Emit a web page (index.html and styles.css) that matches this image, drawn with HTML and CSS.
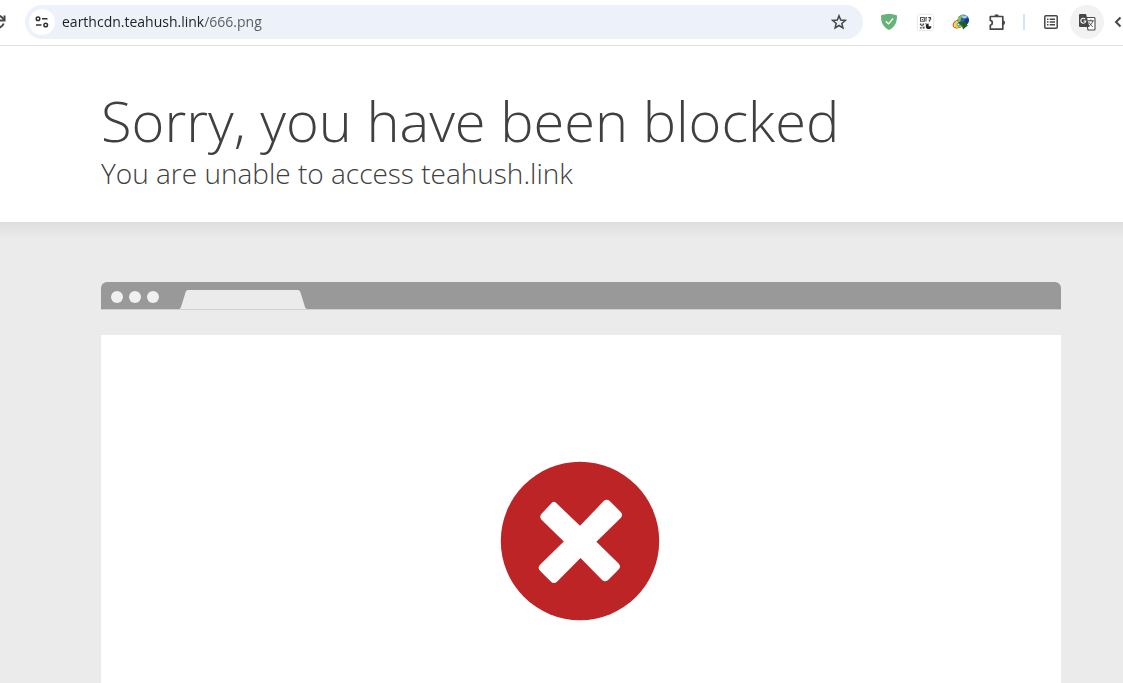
FILE: index.html
```html
<!DOCTYPE html>
<html lang="en">
<head>
  <meta charset="UTF-8">
  <meta name="viewport" content="width=device-width, initial-scale=1">
  <title>Sorry, you have been blocked</title>
  <link rel="stylesheet" href="styles.css">
</head>
<body>
  <!-- Browser toolbar -->
  <div class="toolbar">
    <button class="reload" aria-label="Reload">
      <svg width="16" height="16" viewBox="0 0 16 16" fill="none" stroke="#474747" stroke-width="2">
        <path d="M13.6 9.5A6 6 0 1 1 12.4 3.9L14 5.6"/>
        <path d="M14.5 1.500v5h-5"/>
      </svg>
    </button>

    <form class="omnibox">
      <button type="button" class="site-info" aria-label="View site information">
        <svg width="14" height="12" viewBox="0 0 14 12" fill="none" stroke="#303134" stroke-width="1.5">
          <circle cx="3" cy="2.8" r="1.8"/>
          <path d="M7 2.8h5.5M1 9h5.5"/>
          <circle cx="10.7" cy="9" r="1.8"/>
        </svg>
      </button>
      <input type="text" class="url" aria-label="Address" value="earthcdn.teahush.link/666.png" spellcheck="false">
      <button type="button" class="star" aria-label="Bookmark this page">
        <svg width="16" height="16" viewBox="0 0 16 16" fill="none" stroke="#474747" stroke-width="1.5">
          <path d="M8 1.8l1.7 4.3 4.6.3-3.5 3 1.1 4.5L8 11.5l-3.9 2.4 1.1-4.5-3.5-3 4.6-.3z"/>
        </svg>
      </button>
    </form>

    <div class="extensions">
      <button class="tool" aria-label="Ad blocker">
        <svg width="16" height="16" viewBox="0 0 16 16">
          <path d="M8 0c2.8 0 5.7.6 8 1.4C16 8 14.6 12.2 8 16 1.4 12.2 0 8 0 1.4 2.3.6 5.2 0 8 0z" fill="#67b279"/>
          <path d="M4.8 7.2l2.7 2.7 4.6-5.4" fill="none" stroke="#fff" stroke-width="1.3"/>
        </svg>
      </button>
      <button class="tool" aria-label="QR code">
        <svg class="qr" width="15" height="15" viewBox="0 0 16 16">
          <rect width="16" height="16" rx="1" fill="#fff"/>
          <path d="M2.7 2.7h4v4h-4z" fill="none" stroke="#555" stroke-width="1.2"/>
          <path d="M4.2 4.2h1v1h-1zM8 2h1.500v1.500H9V7H8zM11 2h3v3h-1v2h-1.500V5h1V3.500H11zM2 9h1.500v1.500H5V9h1.500v2H5v1H3.500v-1H2zM2 13h2v1.500H2zM5 12.500h2v2H5zM8 8.500h1V10H8z" fill="#444"/>
          <path d="M11.300 9v3h3A3 3 0 1 1 11.300 9z" fill="#222"/>
        </svg>
      </button>
      <button class="tool" aria-label="Download manager">
        <svg width="18" height="16" viewBox="0 0 18 16">
          <ellipse cx="6.500" cy="9.800" rx="5.600" ry="3.700" transform="rotate(-25 6.500 9.800)" fill="#fff" stroke="#d9532b" stroke-width="1.200"/>
          <ellipse cx="7" cy="9.800" rx="4.300" ry="2.600" transform="rotate(-25 7 9.800)" fill="#fff" stroke="#f2d32e" stroke-width="1.500"/>
          <ellipse cx="7.500" cy="10" rx="2.800" ry="1.500" transform="rotate(-25 7.500 10)" fill="#fff" stroke="#55b94b" stroke-width="1.200"/>
          <circle cx="11.300" cy="6.300" r="5.700" fill="#2b62b8"/>
          <path d="M5.800 4.800C7 2 9.500.8 12 .8L10.500 3 9 4l-.5 3.500-2.300.8z" fill="#8cbf43"/>
          <path d="M13 4.500h3.800c.5 2.500-.5 4.500-2.300 6L12 8z" fill="#1c3784"/>
          <ellipse cx="12.500" cy="3" rx="2.500" ry="1.400" fill="#a9cdf0"/>
          <path d="M7 8l5.500-.5 2 1.500v2l1.500.3-5 4.200-1-3.500z" fill="#17621f"/>
        </svg>
      </button>
      <button class="tool" aria-label="Extensions">
        <svg width="20" height="20" viewBox="0 0 20 20">
          <path d="M3.300 4.500h12.500v12.700H3.300v-3.900a2.500 2.500 0 0 0 0-4.900z" fill="none" stroke="#474747" stroke-width="1.700" stroke-linejoin="round"/>
          <path d="M7.300 4.500a2.300 2.300 0 0 1 4.600 0zM15.800 8.500a2.300 2.300 0 0 1 0 4.600z" fill="#474747"/>
        </svg>
      </button>
    </div>

    <span class="divider"></span>

    <div class="extensions">
      <button class="tool" aria-label="Reading list">
        <svg width="14" height="14" viewBox="0 0 14 14" fill="none" stroke="#474747" stroke-width="1.5">
          <rect x=".8" y=".8" width="12.4" height="12.4" rx="1"/>
          <path d="M3 4.200h1.500M3 7h1.500M3 9.800h1.500M5.700 4.200H11M5.700 7H11M5.700 9.800H11"/>
        </svg>
      </button>
      <button class="tool tool-active" aria-label="Translate this page">
        <svg width="18" height="18" viewBox="0 0 18 18">
          <path d="M7.500 4.500H16a1 1 0 0 1 1 1V16a1 1 0 0 1-1 1H10z" fill="#fff" stroke="#474747" stroke-width="1.100"/>
          <path d="M2 1h6l3.500 13H2a1 1 0 0 1-1-1V2a1 1 0 0 1 1-1z" fill="#474747"/>
          <path d="M7.200 6.100A2.500 2.500 0 1 0 7.800 8H5.500" fill="none" stroke="#fff" stroke-width="1.100"/>
          <path d="M10 7.800h5.800M12.800 6.500v1.300M14.800 8c-.4 2-2 3.900-3.600 5M11.200 9.500c.7 1.700 2 3 3.600 4.200" fill="none" stroke="#474747"/>
        </svg>
      </button>
    </div>

    <button class="more" aria-label="More">
      <svg width="8" height="12" viewBox="0 0 8 12" fill="none" stroke="#474747" stroke-width="2">
        <path d="M6.500 1.500L2 6l4.500 4.500"/>
      </svg>
    </button>
  </div>

  <!-- Error page -->
  <header class="header">
    <h1>Sorry, you have been blocked</h1>
    <h2>You are unable to access teahush.link</h2>
  </header>

  <main class="section">
    <div class="screenshot">
      <div class="window-bar">
        <span class="dot"></span>
        <span class="dot"></span>
        <span class="dot"></span>
        <svg class="tab" width="128" height="19" viewBox="0 0 128 19">
          <path d="M0 19c1 0 1.500-1 2-2L6.500 2.500C7 1 7.500 0 9.500 0h109c2 0 2.500 1 3 2.500L126 17c.5 1 1 2 2 2z" fill="#ebebeb"/>
        </svg>
      </div>
      <div class="window-body">
        <svg width="160" height="160" viewBox="0 0 160 160" role="img" aria-label="Blocked">
          <circle cx="80" cy="80" r="79.2" fill="#bd2426"/>
          <path d="M55.700 41.500L80 64.800l23.700-24.700q3-2.800 6 0l11 10.800q2.800 3 0 6L96.400 80.800l22.200 21.700q2.800 3 0 6l-10.500 10.500q-3 2.600-6 0L80.500 97 57 120.700q-3 2.600-6 0L40 109.800q-2.800-3 0-6L63.800 80.500 41.500 58.800q-2.500-3 0-6L50.700 43q2.500-3.500 5-1.500z" fill="#fff"/>
        </svg>
      </div>
    </div>
  </main>
</body>
</html>
```
FILE: styles.css
```css
* {
  box-sizing: border-box;
}

body {
  margin: 0;
  min-height: 100vh;
  display: flex;
  flex-direction: column;
  overflow-x: hidden;
  font-family: "Open Sans", "Noto Sans", sans-serif;
  color: #404040;
  background: #fff;
}

button {
  display: flex;
  align-items: center;
  justify-content: center;
  padding: 0;
  border: none;
  background: none;
  cursor: pointer;
}

/* Toolbar */
.toolbar {
  display: flex;
  align-items: center;
  height: 46px;
  padding-bottom: 1px;
  border-bottom: 1px solid #e1e3e1;
}

.reload {
  width: 6px;
  margin-right: 19px;
  justify-content: flex-end;
  overflow: hidden;
}

.reload svg {
  flex-shrink: 0;
}

.omnibox {
  flex: 1;
  display: flex;
  align-items: center;
  height: 34px;
  padding: 0 16px 0 4px;
  margin-right: 8px;
  border-radius: 17px;
  background: #ecf1fa;
}

.site-info {
  width: 26px;
  height: 26px;
  border-radius: 50%;
  background: #fff;
}

/* host is dark, path is lighter */
.url {
  flex: 1;
  min-width: 0;
  padding: 0;
  margin-left: 7px;
  border: none;
  outline: none;
  font-family: inherit;
  font-size: 14px;
  line-height: 20px;
  color: transparent;
  background: linear-gradient(to right, #1f1f1f 142px, #55585c 142px);
  -webkit-background-clip: text;
  background-clip: text;
}

.extensions {
  display: flex;
}

.tool {
  width: 36px;
  height: 34px;
}

.tool-active {
  width: 34px;
  margin: 0 1px;
  border-radius: 50%;
  background: #f2f2f2;
}

.qr {
  border-radius: 1px;
  box-shadow: 0 0 2px rgba(0, 0, 0, 0.3);
}

.divider {
  width: 2px;
  height: 16px;
  margin: 0 8px;
  background: #d3e3fd;
}

.more {
  width: 18px;
  padding-left: 8px;
}

/* Header */
.header {
  padding: 42px 62px 32px 101px;
}

h1,
h2 {
  margin: 0;
  font-weight: 300;
}

h1 {
  font-size: 56px;
  line-height: 64px;
}

h2 {
  padding-top: 4px;
  font-size: 28px;
  line-height: 34px;
}

/* Browser illustration */
.section {
  flex: 1;
  display: flex;
  padding: 60px 62px 0 101px;
  background: linear-gradient(#dedede, #ebebeb 16px);
}

.screenshot {
  flex: 1;
  display: flex;
  flex-direction: column;
}

.window-bar {
  display: flex;
  align-items: center;
  gap: 6px;
  height: 28px;
  padding: 2px 10px 0;
  border-bottom: 1px solid #d0d0d0;
  border-radius: 6px 6px 0 0;
  background: #999;
}

.dot {
  width: 12px;
  height: 12px;
  border-radius: 50%;
  background: #f0f0f0;
}

.tab {
  align-self: flex-end;
  margin-left: 14px;
}

.window-body {
  flex: 1;
  display: flex;
  justify-content: center;
  padding: 126px 2px 0 0;
  margin-top: 25px;
  background: #fff;
}
```
